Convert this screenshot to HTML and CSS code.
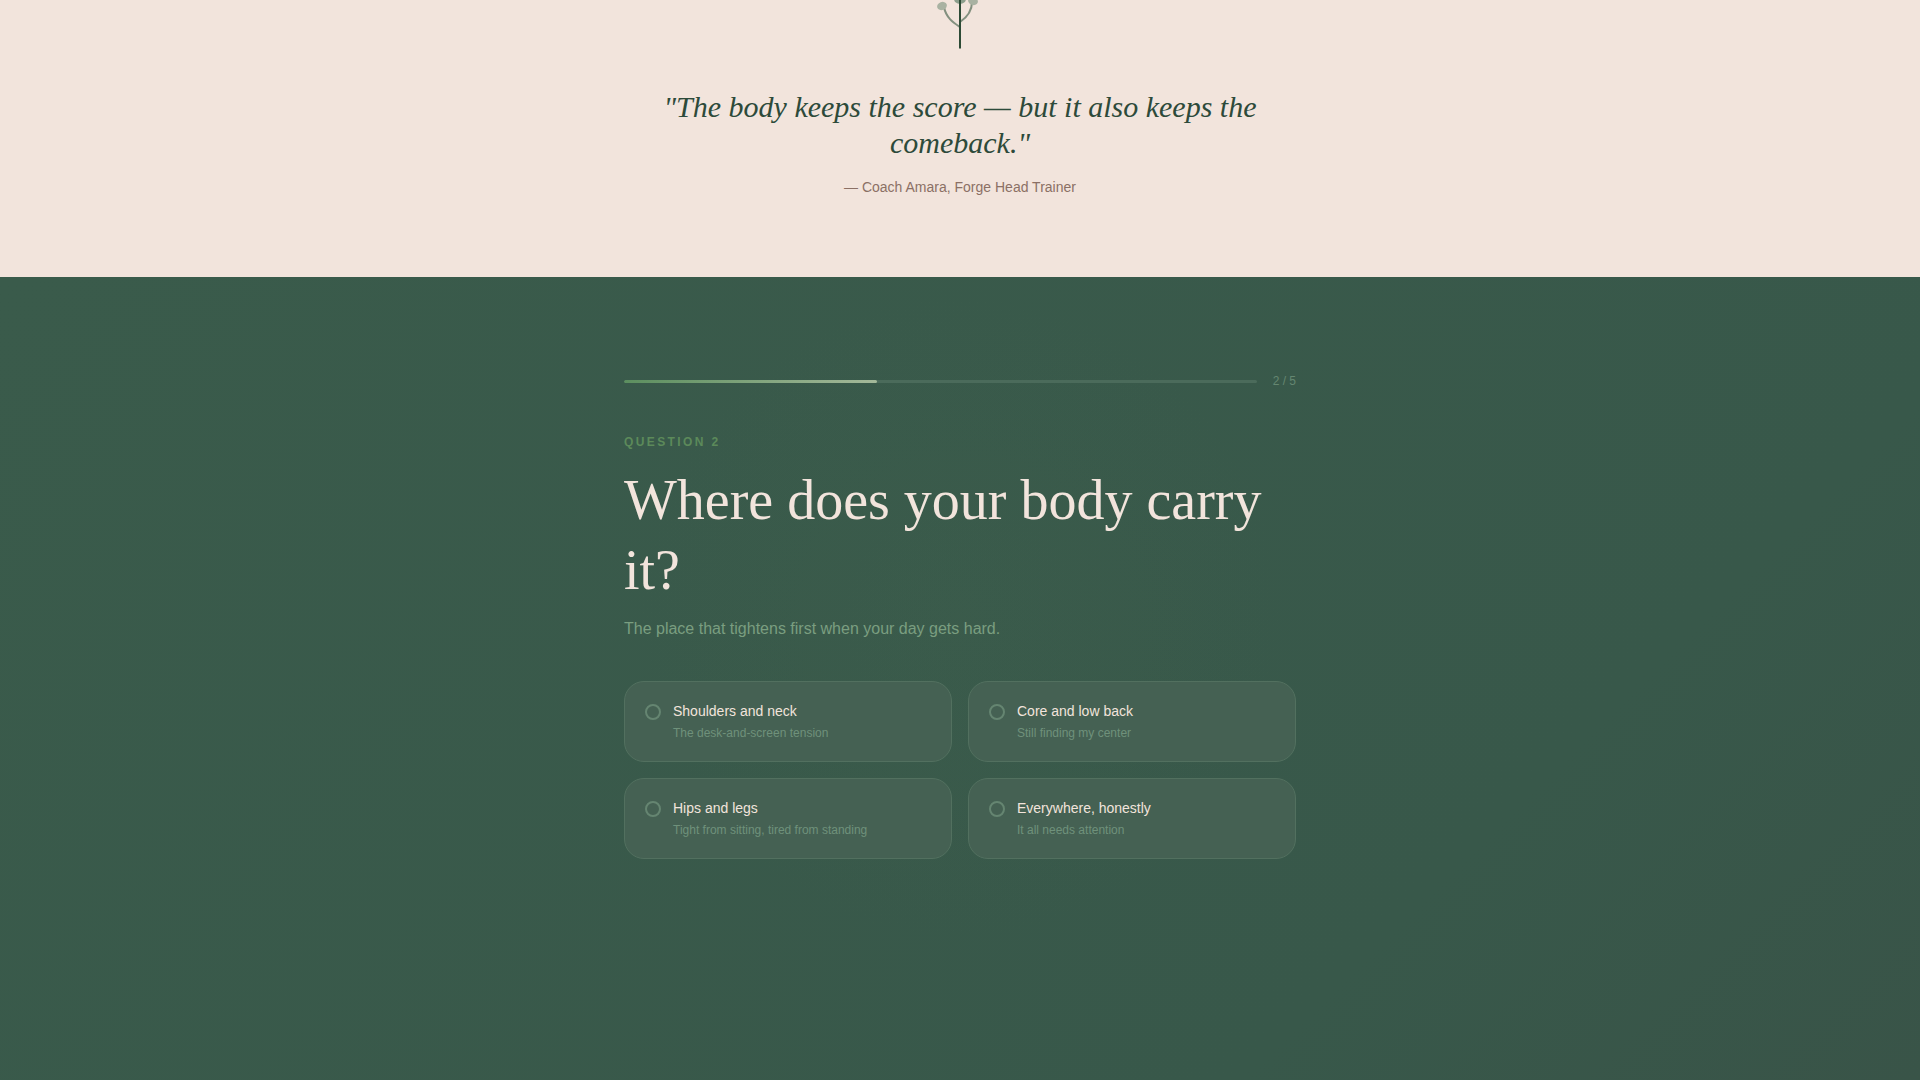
FILE: index.html
```
<!DOCTYPE html>
<html lang="en">
<head>
    <meta charset="UTF-8">
    <meta name="viewport" content="width=device-width, initial-scale=1.0">
    <link rel="stylesheet" href="styles.css">
    <title>Forge</title>
</head>
<body>

<section class="quote">
    <svg class="sprig" viewBox="0 0 60 49" width="60" height="49" aria-hidden="true">
        <g fill="none" stroke="#83907f" stroke-width="2">
            <path d="M30 27C24 23 16 18 14 7"/>
            <path d="M30 22C36 18 42 12 42 2"/>
        </g>
        <g fill="#a9b2a2">
            <ellipse cx="12" cy="6" rx="5" ry="4" transform="rotate(-20 12 6)"/>
            <ellipse cx="43" cy="1" rx="5" ry="4" transform="rotate(20 43 1)"/>
        </g>
        <ellipse cx="30" cy="-1" rx="6" ry="5" fill="#8d9f8d"/>
        <path d="M30 0V48.5" stroke="#2d4a35" stroke-width="2"/>
    </svg>
    <blockquote class="quote-text">"The body keeps the score — but it also keeps the comeback."</blockquote>
    <p class="quote-author">— Coach Amara, Forge Head Trainer</p>
</section>

<section class="quiz">
    <form class="quiz-inner">
        <div class="progress">
            <div class="progress-track">
                <div class="progress-fill" style="width: 40%"></div>
            </div>
            <span class="progress-count">2 / 5</span>
        </div>

        <p class="eyebrow">Question 2</p>
        <h2 class="title" id="question">Where does your body carry it?</h2>
        <p class="subtitle">The place that tightens first when your day gets hard.</p>

        <div class="options" role="radiogroup" aria-labelledby="question">
            <label class="option">
                <input type="radio" name="area" value="shoulders">
                <span class="option-body">
                    <span class="option-name">Shoulders and neck</span>
                    <span class="option-note">The desk-and-screen tension</span>
                </span>
            </label>
            <label class="option">
                <input type="radio" name="area" value="core">
                <span class="option-body">
                    <span class="option-name">Core and low back</span>
                    <span class="option-note">Still finding my center</span>
                </span>
            </label>
            <label class="option">
                <input type="radio" name="area" value="hips">
                <span class="option-body">
                    <span class="option-name">Hips and legs</span>
                    <span class="option-note">Tight from sitting, tired from standing</span>
                </span>
            </label>
            <label class="option">
                <input type="radio" name="area" value="everywhere">
                <span class="option-body">
                    <span class="option-name">Everywhere, honestly</span>
                    <span class="option-note">It all needs attention</span>
                </span>
            </label>
        </div>
    </form>
</section>

</body>
</html>
```
FILE: styles.css
```
* {
    box-sizing: border-box;
}

body {
    display: flex;
    flex-direction: column;
    min-height: 100vh;
    margin: 0;
    font-family: "Liberation Sans", Arial, sans-serif;
    background-color: #f2e4dc;
}

/* Quote */
.quote {
    display: flex;
    flex-direction: column;
    align-items: center;
    padding: 0 24px 80px;
    text-align: center;
}

.sprig {
    display: block;
}

.quote-text {
    max-width: 640px;
    margin: 40px 0 16px;
    font-family: "Liberation Serif", "Times New Roman", serif;
    font-size: 30px;
    font-style: italic;
    line-height: 36px;
    color: #2d4a3a;
}

.quote-author {
    margin: 0;
    font-size: 14px;
    line-height: 20px;
    color: #8b7065;
}

/* Quiz */
.quiz {
    flex: 1;
    padding: 96px 24px;
    background:
        radial-gradient(circle at 50% 340px, rgba(61, 94, 76, 0.4), rgba(61, 94, 76, 0) 320px),
        linear-gradient(135deg, #3a5b4b 0%, #38584a 75%, #395448 100%);
}

.quiz-inner {
    max-width: 672px;
    margin: 0 auto;
}

.progress {
    display: flex;
    align-items: center;
    gap: 16px;
    margin-bottom: 44px;
}

.progress-track {
    flex: 1;
    height: 3px;
    border-radius: 2px;
    background-color: #4b6b5b;
    overflow: hidden;
}

.progress-fill {
    height: 100%;
    border-radius: 2px;
    background: linear-gradient(90deg, #5c8f5f, #a3b899);
}

.progress-count {
    font-size: 12px;
    line-height: 16px;
    color: #658771;
}

.eyebrow {
    margin: 0 0 14px;
    font-size: 12px;
    font-weight: bold;
    line-height: 18px;
    letter-spacing: 0.2em;
    text-transform: uppercase;
    color: #5c8a5a;
}

.title {
    margin: 0 0 12px;
    font-family: "Liberation Serif", "Times New Roman", serif;
    font-size: 56px;
    font-weight: normal;
    line-height: 70px;
    color: #f2e4dc;
}

.subtitle {
    margin: 0 0 40px;
    font-size: 16px;
    line-height: 24px;
    color: #7a9e80;
}

.options {
    display: grid;
    grid-template-columns: 1fr 1fr;
    gap: 16px;
}

.option {
    display: flex;
    gap: 12px;
    padding: 19px 20px;
    border: 1px solid #52705f;
    border-radius: 20px;
    background-color: #456153;
    cursor: pointer;
}

.option input {
    appearance: none;
    flex: none;
    width: 16px;
    height: 16px;
    margin: 3px 0 0;
    border: 2px solid #658571;
    border-radius: 50%;
    cursor: pointer;
}

.option input:checked {
    background-color: #a3b899;
}

.option-name,
.option-note {
    display: block;
}

.option-name {
    margin-bottom: 2px;
    font-size: 14px;
    line-height: 21px;
    color: #f2e4dc;
}

.option-note {
    font-size: 12px;
    line-height: 18px;
    color: #6f917b;
}
```
